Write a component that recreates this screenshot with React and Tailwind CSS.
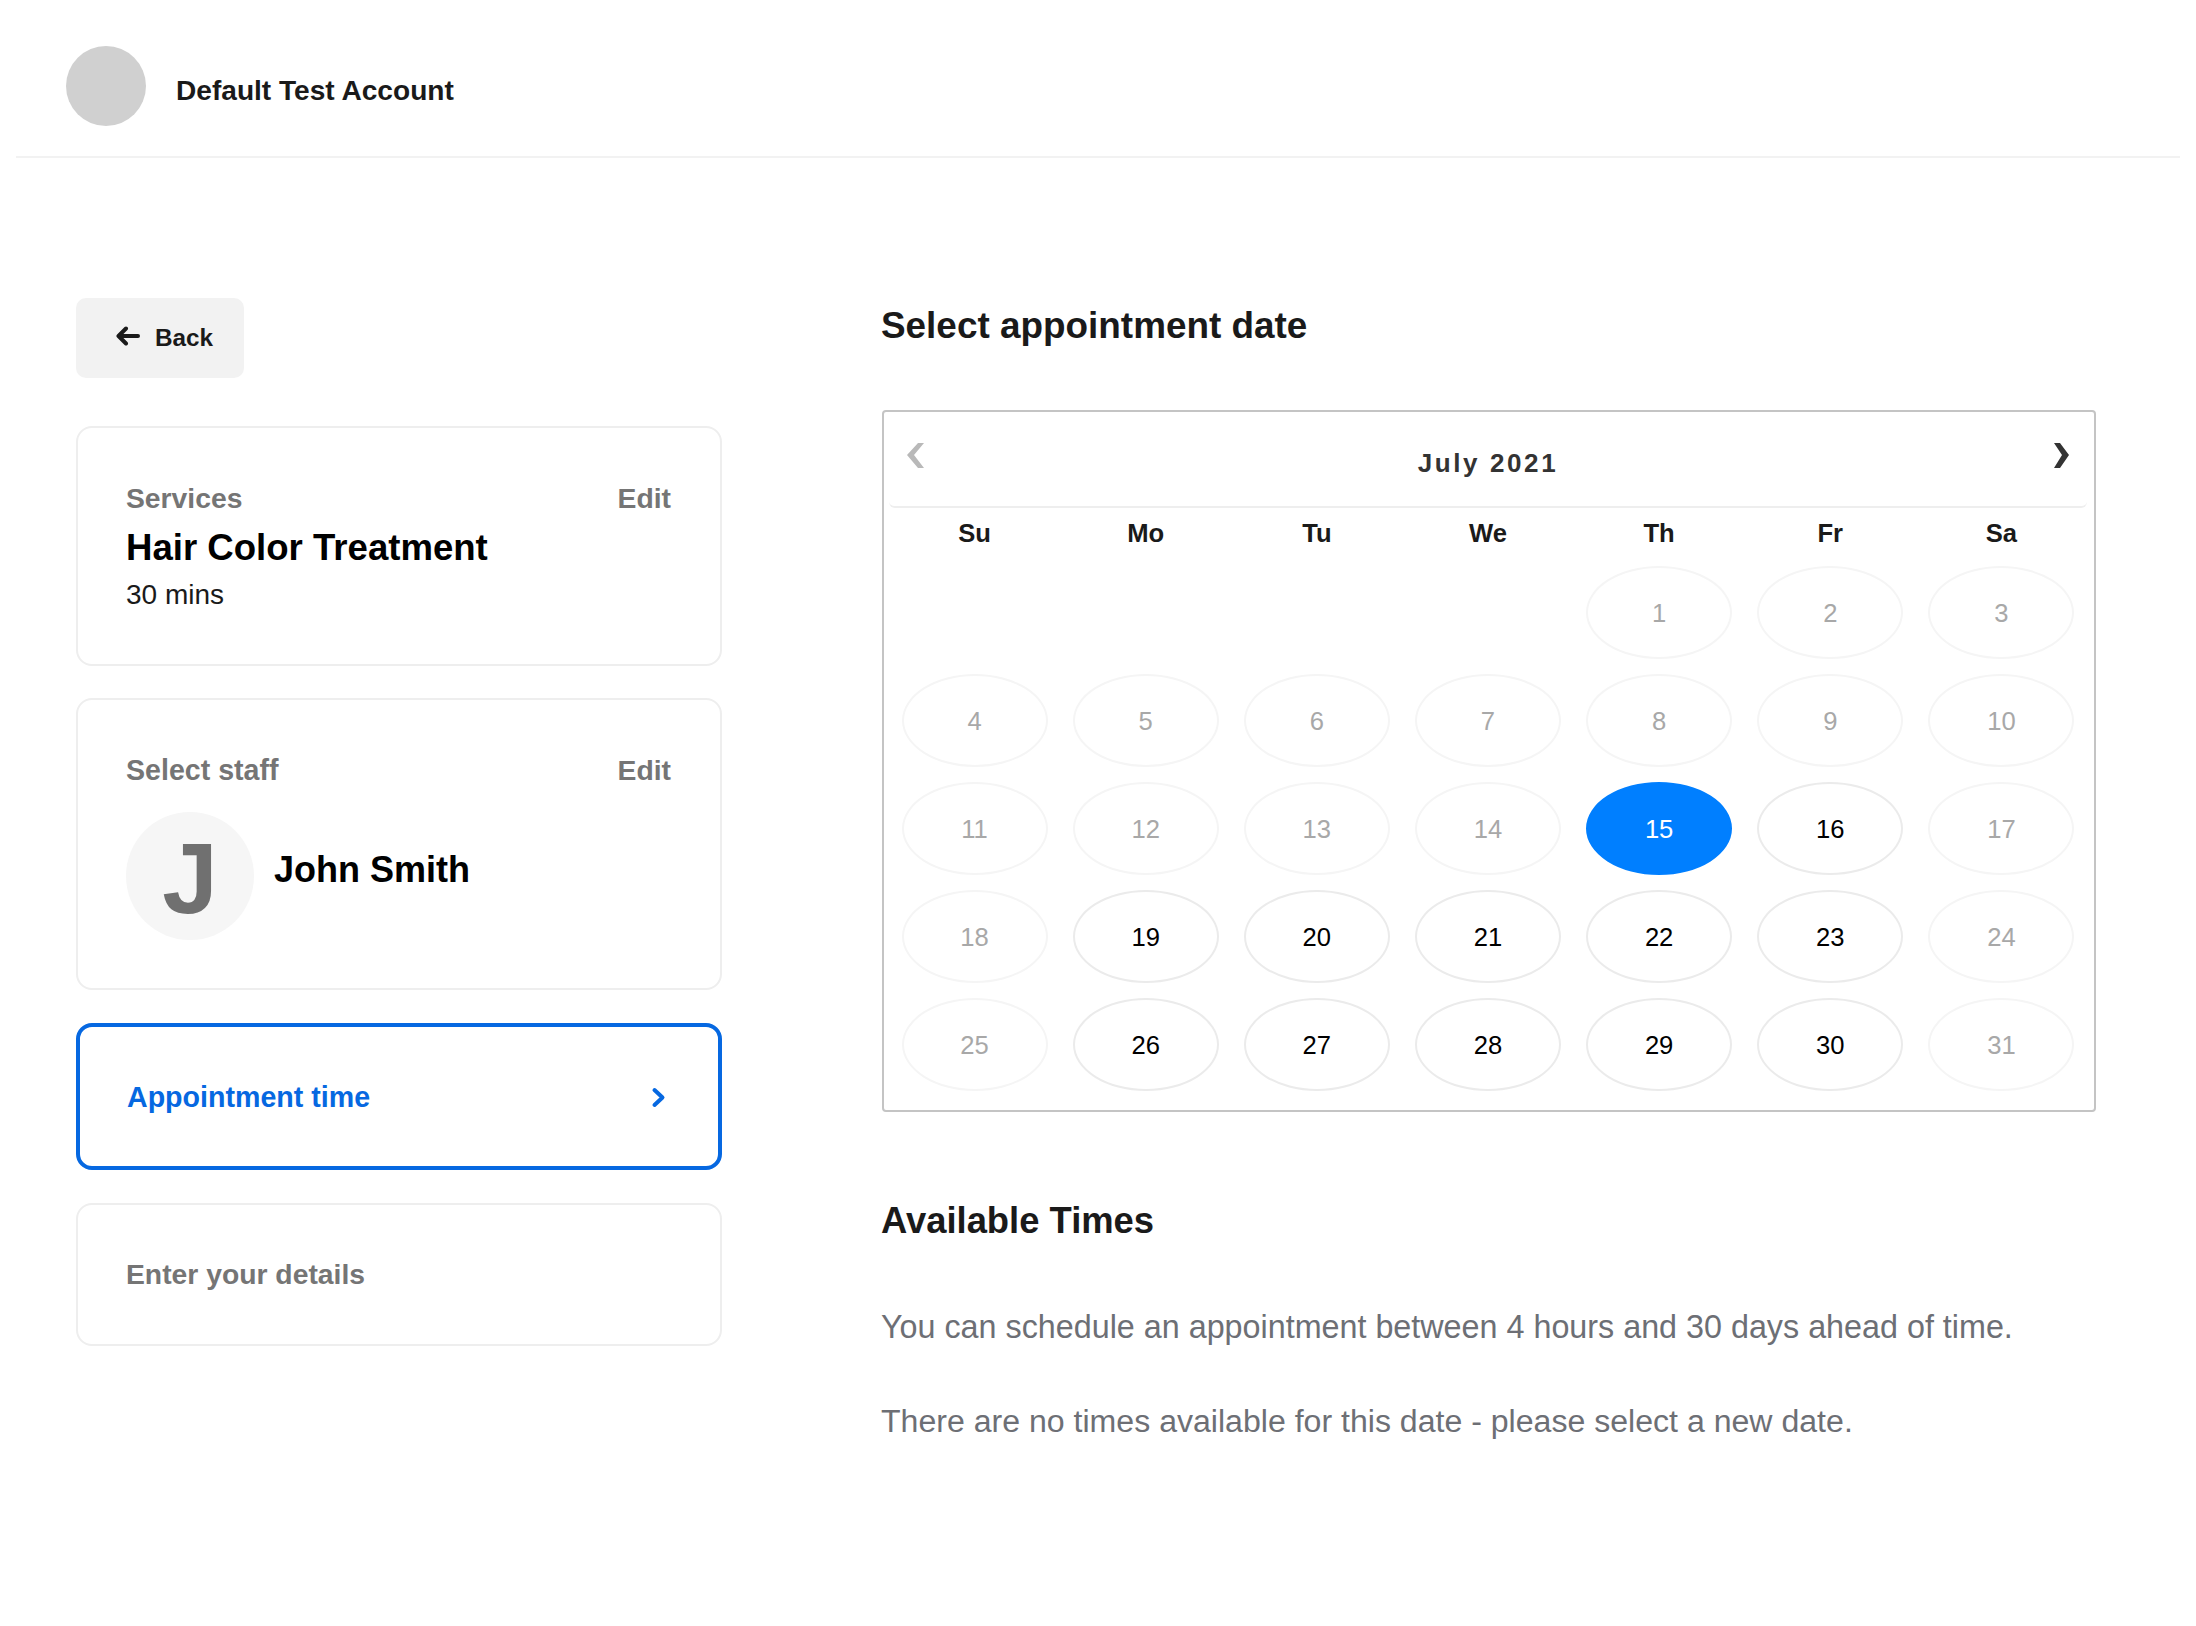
import React from "react";

const dow = ["Su", "Mo", "Tu", "We", "Th", "Fr", "Sa"];
const available = [16, 19, 20, 21, 22, 23, 26, 27, 28, 29, 30];

function Day({ d }) {
  if (d === 0) return <div className="h-[93px] w-[146px]" />;
  const cls =
    d === 15
      ? "bg-[#007fff] text-white border-[#007fff]"
      : available.includes(d)
      ? "border-[#ebebeb] text-black"
      : "border-[#f5f5f5] text-[#a8a8a8]";
  return (
    <div className={`h-[93px] w-[146px] flex items-center justify-center rounded-[50%] border-2 pt-[1px] text-[25.6px] ${cls}`}>
      {d}
    </div>
  );
}

function Card({ children, className = "" }) {
  return <div className={`w-[646px] rounded-[16px] border-2 border-[#eeeeee] pl-[48px] pr-[49px] ${className}`}>{children}</div>;
}

export default function App() {
  const days = [0, 0, 0, 0, ...Array.from({ length: 31 }, (_, i) => i + 1)];
  return (
    <div className="min-h-[1626px] bg-white text-[#1a1a1a] font-['Liberation_Sans',Arial,sans-serif]">
      <header className="mx-4 h-[158px] border-b-2 border-[#f2f2f2] pl-[50px] pt-[46px] flex items-start">
        <div className="h-[80px] w-[80px] rounded-full bg-[#d0d0d0]" />
        <div className="ml-[30px] mt-[29px] text-[28.1px] leading-[32px] font-bold">Default Test Account</div>
      </header>

      <main className="flex pl-[76px]">
        <div className="w-[646px] pt-[140px]">
          <button className="flex h-[80px] w-[168px] items-center rounded-[10px] bg-[#f2f2f2] pl-[40px]">
            <svg className="mb-[4px]" width="24" height="20" viewBox="0 0 24 20" fill="none" stroke="#1a1a1a" strokeWidth="4" strokeLinecap="round" strokeLinejoin="round">
              <path d="M22 10H3M10 2.5L2.5 10l7.5 7.5" />
            </svg>
            <span className="ml-[15px] text-[24.3px] font-bold leading-none">Back</span>
          </button>

          <div className="mt-[48px] flex flex-col">
            <Card className="h-[240px] pt-[54px]">
              <div className="flex justify-between text-[28.3px] leading-[32px] font-bold text-[#757575]">
                <span>Services</span>
                <span>Edit</span>
              </div>
              <div className="mt-[12px] text-[36.6px] leading-[44px] font-bold text-black">Hair Color Treatment</div>
              <div className="mt-[5px] text-[28px] leading-[40px]">30 mins</div>
            </Card>

            <Card className="mt-[32px] h-[292px] pt-[54px]">
              <div className="flex justify-between text-[28.3px] leading-[32px] font-bold text-[#757575]">
                <span className="text-[28.6px]">Select staff</span>
                <span>Edit</span>
              </div>
              <div className="mt-[26px] flex items-start">
                <div className="flex h-[128px] w-[128px] items-center justify-center rounded-full bg-[#f6f6f6] pt-[3px] text-[100px] font-bold leading-none text-[#707070]">
                  J
                </div>
                <div className="ml-[20px] mt-[36px] text-[36px] leading-[44px] font-bold text-black">John Smith</div>
              </div>
            </Card>

            <div className="mt-[33px] flex h-[147px] w-[646px] items-center justify-between rounded-[16px] border-[4px] border-[#0668e1] pl-[47px] pr-[51px] pt-[2px]">
              <span className="text-[28.6px] font-bold text-[#0668e1]">Appointment time</span>
              <svg width="16" height="24" viewBox="0 0 16 24" fill="none" stroke="#0668e1" strokeWidth="4" strokeLinecap="round" strokeLinejoin="round">
                <path d="M3.5 4l8 7.5-8 7.5" />
              </svg>
            </div>

            <Card className="mt-[33px] flex h-[143px] items-center">
              <span className="text-[28.3px] font-bold text-[#757575]">Enter your details</span>
            </Card>
          </div>
        </div>

        <div className="ml-[160px] w-[1214px] pt-[145px]">
          <h1 className="-ml-px text-[36.9px] leading-[46px] font-bold">Select appointment date</h1>

          <div className="mt-[61px] h-[702px] rounded-[4px] border-2 border-[#c4c4c4] pl-[5px] pr-[7px]">
            <div className="relative flex h-[96px] items-center justify-center rounded-b-[6px] border-b-2 border-[#eeeeee]">
              <span className="pt-[9px] text-[26px] font-bold tracking-[2.6px] text-[#333333]">July 2021</span>
              <svg className="absolute left-[18px] top-[31px]" width="17" height="25" viewBox="0 0 17 25" fill="#b9b9b9">
                <path d="M11 0h6L7 12l10 13h-6L0 12z" />
              </svg>
              <svg className="absolute right-[18px] top-[31px]" width="15" height="25" viewBox="0 0 15 25" fill="#333333">
                <path d="M0 0h6l9 12-9 13H0l8-13z" />
              </svg>
            </div>
            <div className="grid grid-cols-7 pt-[9px] text-center text-[25.6px] font-bold leading-[32px]">
              {dow.map((d) => (
                <div key={d}>{d}</div>
              ))}
            </div>
            <div className="mt-[17px] grid grid-cols-7 gap-y-[15px] justify-items-center">
              {days.map((d, i) => (
                <Day key={i} d={d} />
              ))}
            </div>
          </div>

          <h2 className="-ml-px mt-[87px] text-[36.4px] leading-[44px] font-bold">Available Times</h2>
          <p className="-ml-px mt-[62px] text-[32.3px] leading-[44px] text-[#6d6f75]">
            You can schedule an appointment between 4 hours and 30 days ahead of time.
          </p>
          <p className="-ml-px mt-[50px] text-[32.1px] leading-[44px] text-[#6d6f75]">
            There are no times available for this date - please select a new date.
          </p>
        </div>
      </main>
    </div>
  );
}
